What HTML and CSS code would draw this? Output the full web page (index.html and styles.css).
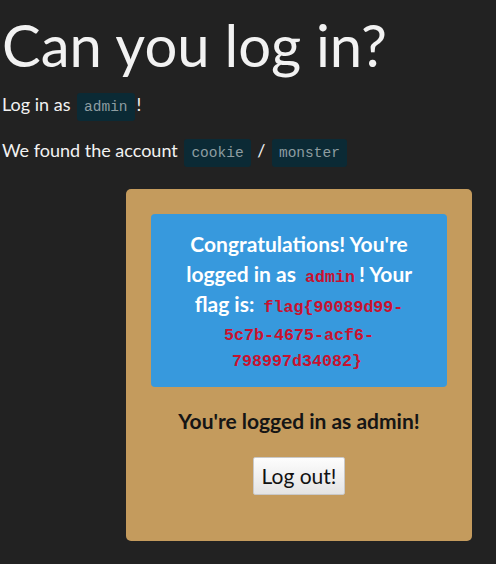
FILE: index.html
```html
<!DOCTYPE html>
<html>
<head>
<meta charset="utf-8">
<link rel="stylesheet" href="styles.css">
</head>
<body>
<h1 class="title">Can you log in?</h1>
<p class="line">Log in as <code class="tag">admin</code>!</p>
<p class="line">We found the account <code class="tag">cookie</code> / <code class="tag">monster</code></p>
<div class="card">
  <div class="alert"><span class="msg">Congratulations!</span> <span class="msg">You're</span> <span class="msg">logged in as</span> <code class="flag">admin</code><span class="msg">! Your</span> <span class="msg">flag is:</span> <code class="flag">flag{90089d99-5c7b-4675-acf6-798997d34082}</code></div>
  <p class="status">You're logged in as admin!</p>
  <div class="actions"><button class="btn">Log out!</button></div>
</div>
</body>
</html>
```
FILE: styles.css
```css
html, body { margin: 0; padding: 0; }
body {
  background: #222222;
  color: #f2f2f2;
  font-family: Lato, "Noto Sans", sans-serif;
  padding: 0 2px;
}
.title {
  font-size: 58px;
  font-weight: 400;
  line-height: 64px;
  margin: 13px 0 0;
}
.line {
  font-size: 18px;
  line-height: 28px;
  margin: 13px 0 0;
}
.line + .line { margin-top: 15px; }
.tag {
  font-family: "Liberation Mono", monospace;
  font-size: 14.5px;
  color: #8e9da1;
  background: #0b2a35;
  padding: 6px 7px;
  border-radius: 3px;
  margin: 0 2px;
}
.card {
  width: 346px;
  margin: 22px 22px 0 auto;
  background: #c49b5d;
  border-radius: 5px;
  padding: 25px 25px 46px;
  box-sizing: border-box;
}
.alert {
  background: #3799dd;
  border-radius: 4px;
  color: #fff;
  font-weight: 700;
  font-size: 21px;
  line-height: 25px;
  text-align: center;
  padding: 15px 33px 17px;
}
.msg { line-height: 30px; }
.flag {
  font-family: "Liberation Mono", monospace;
  font-size: 16.67px;
  line-height: 1;
  font-weight: 700;
  color: #c9112f;
  margin: 0 4px;
}
.status {
  text-align: center;
  color: #151515;
  font-size: 21px;
  font-weight: 700;
  margin: 21px 0 24px;
}
.actions { text-align: center; }
.btn {
  font-family: Lato, "Noto Sans", sans-serif;
  font-size: 21px;
  color: #111;
  background: linear-gradient(#fdfdfd, #e4e4e4);
  border: 1px solid #c9c9c9;
  border-radius: 2px;
  padding: 5px 8px 6px;
}
```
